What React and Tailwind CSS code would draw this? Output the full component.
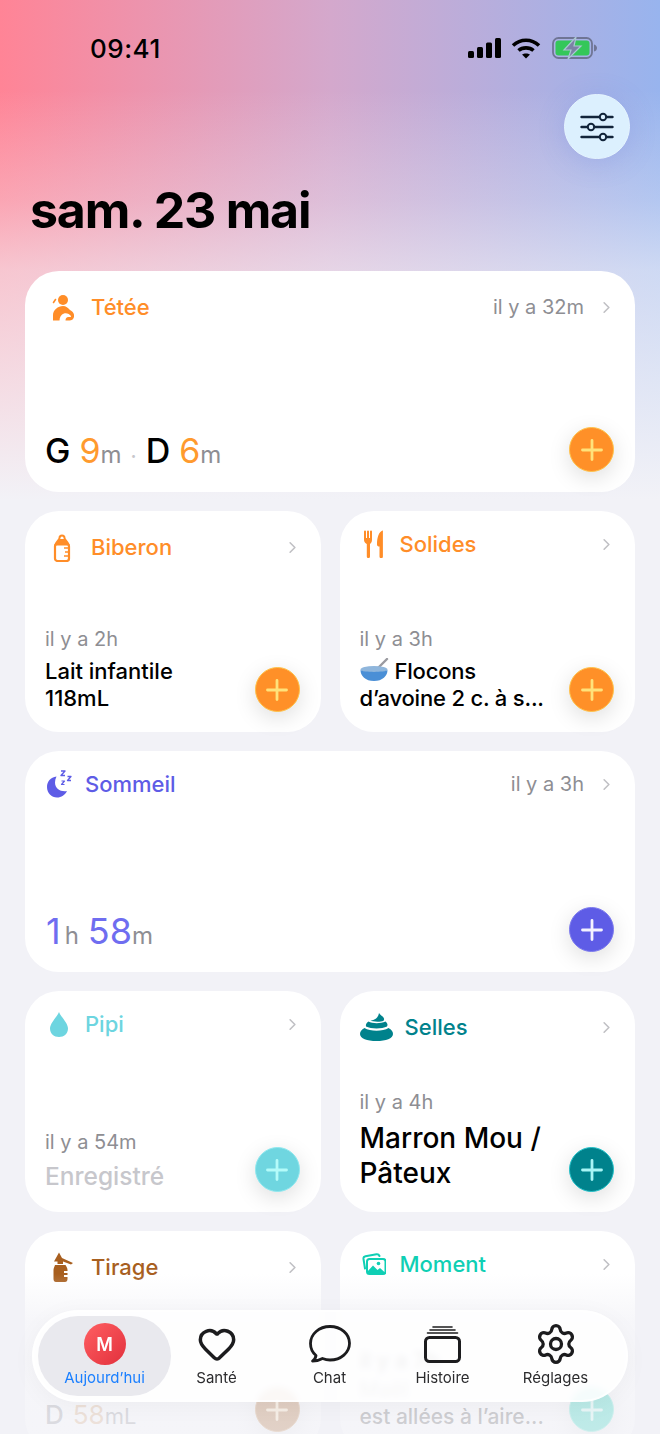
import React from 'react';
import { Heart, Settings, ChevronRight } from 'lucide-react';

// --- Icons ---
const FeedIcon = () => (
  <svg width="22" height="27" viewBox="0 0 22 27" fill="#ff8d28">
    <circle cx="11" cy="6" r="5" />
    <path d="M3.5 5.5 L1.5 8.5" stroke="#ff8d28" strokeWidth="1.6" strokeLinecap="round" />
    <path d="M1 26.5V21C1 16 6 12 11 12C14 12 16 14 18 16C21 17.5 22.5 20 22 23C21.5 25.5 19.5 26.5 17.5 26.5H13.5C13.5 24.5 14.5 23 16.5 23C18 23 19 23.5 19 22C17.5 20 14.5 18.5 12 19.5C9 20.5 7.5 23.5 7.5 26.5Z" />
  </svg>
);

const BottleIcon = () => (
  <svg width="20" height="29" viewBox="0 0 20 29">
    <path d="M7.5 5C7.5 1.5 12.5 1.5 12.5 5C12.5 7 15 8 16.5 11.5H3.5C5 8 7.5 7 7.5 5Z" fill="none" stroke="#ff8d28" strokeWidth="2" />
    <path d="M3.5 11C5 8 7 7.5 7.5 6H12.5C13 7.5 15 8 16.5 11Z" fill="#ff8d28" />
    <rect x="3" y="11" width="14" height="17" rx="2.5" fill="none" stroke="#ff8d28" strokeWidth="2.2" />
    <path d="M12 15H17M13 19H17M12 23H17" stroke="#ff8d28" strokeWidth="1.6" />
  </svg>
);

const CutleryIcon = () => (
  <svg width="20" height="28" viewBox="0 0 20 28" fill="#ff8d28">
    <path d="M0 1.5a1 1 0 0 1 2 0V8h1V1.5a1 1 0 0 1 2 0V8h1V1.5a1 1 0 0 1 2 0V10C8 12.5 6.5 13.5 6 14V26.5a1.6 1.6 0 0 1-3.2 0V14C2 13.5 0 12.5 0 10Z" />
    <path d="M18.5 0.5C15 2 13 7 13 14.5C13 16 14 16.5 15.5 16.5V26.5a1.7 1.7 0 0 0 3.4 0V1C18.9 0.5 18.7 0.4 18.5 0.5Z" />
  </svg>
);

const MoonIcon = () => (
  <svg width="25" height="28" viewBox="0 0 25 28" fill="none">
    <path d="M9.5 6.5C3.5 7.5 0 11.5 0 17C0 23 4.5 27.5 10 27.5C14.5 27.5 18 25 20 21C14 22 8 19 8 12.5C8 10.5 8.5 8.5 9.5 6.5Z" fill="#5e5ce6" />
    <path d="M14 1H18L14 5.5H18" stroke="#5e5ce6" strokeWidth="1.4" strokeLinejoin="round" />
    <path d="M20.5 6.5H24L20.5 10.5H24" stroke="#5e5ce6" strokeWidth="1.3" strokeLinejoin="round" />
    <path d="M14.5 11H17.5L14.5 14.5H17.5" stroke="#5e5ce6" strokeWidth="1.2" strokeLinejoin="round" />
  </svg>
);

const DropIcon = () => (
  <svg width="18" height="25" viewBox="0 0 18 25">
    <path d="M9 0C11 5 18 11 18 16.5C18 21.5 14 25 9 25C4 25 0 21.5 0 16.5C0 11 7 5 9 0Z" fill="#6dd5e0" />
  </svg>
);

const PoopIcon = () => (
  <svg width="33" height="28" viewBox="0 0 33 28" fill="#00828c">
    <path d="M19 0C20 2 23 3 24 5.5C24.5 7.5 23 8.5 21 8.5C16.5 9 12 8.5 10.5 7.5C13 7.5 18 6 19 0Z" />
    <path d="M8.5 8.5C12 10.5 20 11 25.5 8.5C27.5 10 28 12 27 13.5C22 16 11 16 6 13.5C5.5 11.5 6.5 9.5 8.5 8.5Z" />
    <path d="M4.5 15C10 18.5 23 18.5 28.5 15C31.5 16.5 33 18.5 33 21C33 25.5 26 28 16.5 28C7 28 0 25.5 0 21C0 18.5 1.5 16.5 4.5 15Z" />
  </svg>
);

const PumpIcon = () => (
  <svg width="22" height="30" viewBox="0 0 22 30" fill="#a85f1f">
    <path d="M2 9.5L7 0.5L10 6L21 11L19 12.5L11 9.5V12H5.5V9.5Z" />
    <path d="M3 13H13.5C14.5 15 15.5 16 15.5 18V19H12V21H15.5V23H12V25H15.5V27C15.5 29 14.5 30 13 30H4C2.5 30 1.5 29 1.5 27V18C1.5 16 2.5 15 3 13Z" />
  </svg>
);

const PhotosIcon = () => (
  <svg width="24" height="22" viewBox="0 0 24 22" fill="none">
    <path d="M3 15.5L1.5 6C1.3 4.5 2 3.5 3.5 3.2L14.5 1.2C16 1 17 1.8 17.5 3" stroke="#0fcfb4" strokeWidth="2" strokeLinecap="round" />
    <rect x="5" y="6" width="18.5" height="15" rx="2.5" stroke="#0fcfb4" strokeWidth="2" />
    <circle cx="16.5" cy="10.5" r="1.8" fill="#0fcfb4" />
    <path d="M5 19L11 12.5L15.5 17L18 15L23.5 20V21H6Z" fill="#0fcfb4" />
  </svg>
);

const BowlEmoji = () => (
  <svg width="29" height="24" viewBox="0 0 29 24" className="mr-[6px] inline-block align-[-3px]">
    <path d="M27 1L17 11" stroke="#9a9aa0" strokeWidth="2.4" strokeLinecap="round" />
    <ellipse cx="14" cy="11.5" rx="13.5" ry="3.5" fill="#8fb6dc" />
    <path d="M0.5 12C3 14.5 25 14.5 27.5 12C27.5 18 22.5 23 14 23C5.5 23 0.5 18 0.5 12Z" fill="#4a8fd6" />
  </svg>
);

const ChatIcon = () => (
  <svg width="42" height="38" viewBox="0 0 42 38" fill="none" stroke="#1c1c1e" strokeWidth="2.8" strokeLinejoin="round">
    <path d="M21 1.5C10 1.5 1.5 9 1.5 18.5C1.5 23.5 3.5 27.5 7 30.5C6.8 32.5 5.5 34.5 3.5 36C7 36 11 35 13.5 33.5C16 34.5 18.5 35 21 35C32 35 40.5 27.5 40.5 18.25C40.5 9 32 1.5 21 1.5Z" />
  </svg>
);

const StackIcon = () => (
  <svg width="37" height="37" viewBox="0 0 37 37" fill="none" stroke="#1c1c1e" strokeLinecap="round">
    <path d="M9 1H28" strokeWidth="1.6" />
    <path d="M6 4H31" strokeWidth="1.6" />
    <path d="M3.5 7H33.5" strokeWidth="1.6" />
    <rect x="1.5" y="11.5" width="34" height="24" rx="4" strokeWidth="3" />
  </svg>
);

const SlidersIcon = () => (
  <svg width="34" height="30" viewBox="0 0 34 30" fill="none" stroke="#12243a" strokeWidth="2.4" strokeLinecap="round">
    <path d="M1.5 5H19M27 5H32.5" />
    <circle cx="23" cy="5" r="3.2" strokeWidth="2" />
    <path d="M1.5 15H7M15 15H32.5" />
    <circle cx="11" cy="15" r="3.2" strokeWidth="2" />
    <path d="M1.5 25H19M27 25H32.5" />
    <circle cx="23" cy="25" r="3.2" strokeWidth="2" />
  </svg>
);

// --- Small parts ---
const PlusButton = ({ bg, ring, cross }) => (
  <div className={`flex h-[45px] w-[45px] shrink-0 items-center justify-center rounded-full border shadow-[0_6px_22px_rgba(0,0,0,0.13)] ${bg} ${ring}`}>
    <svg width="22" height="22" viewBox="0 0 22 22" stroke={cross} strokeWidth="2.8" strokeLinecap="round">
      <path d="M11 1.5V20.5M1.5 11H20.5" />
    </svg>
  </div>
);

const Ago = ({ children, className = '' }) => (
  <p className={`text-[20px] leading-[24px] text-[#8e8e93] ${className}`}>{children}</p>
);

const Card = ({ icon, iconBox, title, titleColor, headTop, ago, button, children }) => (
  <div className="flex h-[221px] min-w-0 flex-1 flex-col justify-between rounded-[34px] bg-white pr-[21px] pb-[20px] pl-[20px]">
    <div className={`flex items-center ${headTop}`}>
      <div className={`flex shrink-0 items-center ${iconBox}`}>{icon}</div>
      <span className={`text-[22px] leading-[30px] font-medium ${titleColor}`}>{title}</span>
      <div className="ml-auto flex items-center">
        {ago && <Ago>{ago}</Ago>}
        <ChevronRight size={19} strokeWidth={2} className="ml-[13px] mr-[-2px] text-[#c0c0c4]" />
      </div>
    </div>
    <div className="flex items-end justify-between">
      <div className="min-w-0">{children}</div>
      <PlusButton {...button} />
    </div>
  </div>
);

const orange = { bg: 'bg-[#ff9028]', ring: 'border-[#ffc24a]', cross: '#ffe27a' };
const purple = { bg: 'bg-[#5e5ce6]', ring: 'border-[#7d7bee]', cross: '#f4f2ff' };
const cyan = { bg: 'bg-[#6fd6e0]', ring: 'border-[#8fe8ef]', cross: '#b4fbf9' };
const teal = { bg: 'bg-[#00828c]', ring: 'border-[#22c0c8]', cross: '#a8f5f5' };
const brown = { bg: 'bg-[#a85f1f]', ring: 'border-[#c98a4a]', cross: '#ffe0b0' };
const mint = { bg: 'bg-[#0fcfb4]', ring: 'border-[#55e6d0]', cross: '#c8fff4' };

const NavItem = ({ icon, label, active, className = '' }) => (
  <div className={`flex h-[80px] flex-col items-center justify-end pb-[8px] ${active ? 'w-[133px] rounded-[40px] bg-[#e9e9ee]' : 'w-[113px]'} ${className}`}>
    <div className="flex h-[46px] items-center justify-center">{icon}</div>
    <span className={`mt-[1px] text-[15px] leading-[20px] ${active ? 'text-[#1a7fff]' : 'text-[#2c2c2e]'}`}>{label}</span>
  </div>
);

export default function App() {
  return (
    <div className="relative h-[1434px] w-full overflow-hidden bg-[linear-gradient(to_bottom,rgba(242,242,247,0)_90px,rgba(242,242,247,0.3)_200px,rgba(242,242,247,0.6)_270px,#f2f2f7_500px),linear-gradient(to_right,#ff8496,#d4a8cc_50%,#98b4ee)] font-['Inter','Noto_Sans',sans-serif] text-black">
      {/* status bar */}
      <div className="flex h-[94px] items-start justify-between pt-[32px] pr-[62px] pl-[90px]">
        <span className="text-[26px] leading-[34px] font-medium tracking-[0.5px]">09:41</span>
        <div className="flex items-center pt-[5px]">
          <svg width="33" height="20" viewBox="0 0 33 20" fill="#000">
            <rect x="0" y="13" width="6" height="7" rx="1.5" />
            <rect x="9" y="9" width="6" height="11" rx="1.5" />
            <rect x="18" y="4.5" width="6" height="15.5" rx="1.5" />
            <rect x="27" y="0" width="6" height="20" rx="1.5" />
          </svg>
          <svg width="30" height="21" viewBox="0 0 30 21" fill="none" stroke="#000" strokeWidth="3.6" className="ml-[10px]">
            <path d="M2 7.5C9.5 0.5 20.5 0.5 28 7.5" />
            <path d="M7.5 12.5C11.5 9 18.5 9 22.5 12.5" />
            <path d="M15 20.5L11 16.5C13 15 17 15 19 16.5Z" fill="#000" stroke="none" />
          </svg>
          <svg width="46" height="22" viewBox="0 0 46 22" className="ml-[11px]">
            <rect x="1" y="1" width="39" height="20" rx="5.5" fill="none" stroke="#6f7594" strokeWidth="1.8" />
            <rect x="3.5" y="3.5" width="34" height="15" rx="3" fill="#34c759" />
            <path d="M42 7.5C44 8 45 9.5 45 11C45 12.5 44 14 42 14.5Z" fill="#6f7594" />
            <path d="M24 0L12 13H19L16 22L29 9H22Z" fill="#7c82a6" stroke="#a9c7d2" strokeWidth="1.2" />
          </svg>
        </div>
      </div>

      {/* filter button */}
      <div className="flex justify-end pr-[30px]">
        <div className="flex h-[65px] w-[66px] items-center justify-center rounded-full border border-[#e6f5ff] bg-[#dcf0fe] shadow-[0_4px_26px_rgba(110,130,220,0.25)]">
          <SlidersIcon />
        </div>
      </div>

      <h1 className="mt-[20px] pl-[30px] text-[50px] leading-[62px] font-bold tracking-[-1.2px]">sam. 23 mai</h1>

      {/* cards */}
      <div className="mt-[30px] flex flex-col gap-[19px] px-[25px]">
        <div className="flex">
          <Card icon={<FeedIcon />} iconBox="w-[46px] pl-[7px]" title="Tétée" titleColor="text-[#ff8d28]" headTop="pt-[21px]" ago="il y a 32m" button={orange}>
            <p className="-mb-[4px] flex items-baseline text-[34px] leading-[40px] font-medium">
              <span className="mr-[9px]">G</span>
              <span className="font-normal text-[#ff9a2e]">9</span>
              <span className="text-[24px] font-normal text-[#8e8e93]">m</span>
              <span className="mx-[9px] text-[20px] text-[#c7c7cc]">·</span>
              <span className="mr-[9px]">D</span>
              <span className="font-normal text-[#ff9a2e]">6</span>
              <span className="text-[24px] font-normal text-[#8e8e93]">m</span>
            </p>
          </Card>
        </div>

        <div className="flex gap-[19px]">
          <Card icon={<BottleIcon />} iconBox="w-[46px] pl-[7px]" title="Biberon" titleColor="text-[#ff8d28]" headTop="pt-[21px]" button={orange}>
            <Ago className="mb-[7px]">il y a 2h</Ago>
            <p className="text-[22px] leading-[27px] font-medium">Lait infantile<br />118mL</p>
          </Card>
          <Card icon={<CutleryIcon />} iconBox="w-[40px] pl-[4px]" title="Solides" titleColor="text-[#ff8d28]" headTop="pt-[18px]" button={orange}>
            <Ago className="mb-[7px]">il y a 3h</Ago>
            <p className="text-[22px] leading-[27px] font-medium tracking-[-0.2px] whitespace-nowrap"><BowlEmoji />Flocons<br />d’avoine 2 c. à s...</p>
          </Card>
        </div>

        <div className="flex">
          <Card icon={<MoonIcon />} iconBox="w-[40px] pl-[2px]" title="Sommeil" titleColor="text-[#5e5ce6]" headTop="pt-[18px]" ago="il y a 3h" button={purple}>
            <p className="-mb-[4px] flex items-baseline pl-[1px] text-[36px] leading-[40px] font-normal text-[#6f6df0]">
              <span>1</span>
              <span className="ml-[4px] mr-[9px] text-[24px] text-[#8e8e93]">h</span>
              <span>58</span>
              <span className="text-[24px] text-[#8e8e93]">m</span>
            </p>
          </Card>
        </div>

        <div className="flex gap-[19px]">
          <Card icon={<DropIcon />} iconBox="w-[40px] pl-[5px]" title="Pipi" titleColor="text-[#6dd5e0]" headTop="pt-[18px]" button={cyan}>
            <Ago className="mb-[6px]">il y a 54m</Ago>
            <p className="-mb-[1px] text-[24.5px] leading-[33px] font-medium text-[#c7c7cc]">Enregistré</p>
          </Card>
          <Card icon={<PoopIcon />} iconBox="w-[45px]" title="Selles" titleColor="text-[#00828c]" headTop="pt-[21px]" button={teal}>
            <Ago className="mb-[7px]">il y a 4h</Ago>
            <p className="mb-[1px] text-[28px] leading-[35px] font-medium whitespace-nowrap">Marron Mou /<br />Pâteux</p>
          </Card>
        </div>

        <div className="flex gap-[19px]">
          <Card icon={<PumpIcon />} iconBox="w-[46px] pl-[7px]" title="Tirage" titleColor="text-[#a85f1f]" headTop="pt-[21px]" button={brown}>
            <p className="-mb-[2px] flex items-baseline text-[26px] leading-[36px] font-medium">
              <span className="mr-[9px] text-[#8e8e93]">D</span>
              <span className="font-normal text-[#d9a878]">58</span>
              <span className="text-[22px] font-normal text-[#8e8e93]">mL</span>
            </p>
          </Card>
          <Card icon={<PhotosIcon />} iconBox="w-[40px] pl-[2px]" title="Moment" titleColor="text-[#0fcfb4]" headTop="pt-[18px]" button={mint}>
            <p className="mb-[7px] text-[22px] leading-[18px] font-semibold">il y a 7h</p>
            <p className="mb-[2px] text-[21px] leading-[27px] font-medium whitespace-nowrap text-[#555]">Maël<br />est allées à l’aire...</p>
          </Card>
        </div>
      </div>

      {/* fade under the tab bar */}
      <div className="absolute inset-x-0 bottom-0 h-[160px] bg-[linear-gradient(to_bottom,rgba(242,242,247,0)_0%,rgba(242,242,247,0.68)_30%,rgba(242,242,247,0.78)_100%)]" />

      {/* tab bar */}
      <div className="absolute top-[1310px] left-[32px] flex h-[92px] w-[596px] items-center rounded-[46px] border-2 border-white/70 bg-white/85 pl-[4px] shadow-[0_4px_24px_rgba(0,0,0,0.04)] backdrop-blur-[3px]">
        <NavItem
          active
          label="Aujourd’hui"
          icon={
            <div className="flex h-[42px] w-[42px] items-center justify-center rounded-full bg-[linear-gradient(135deg,#ff5f62,#e2303c)] text-[18px] font-semibold text-white">M</div>
          }
        />
        <NavItem className="ml-[-11px]" label="Santé" icon={<Heart size={40} strokeWidth={2.1} color="#1c1c1e" />} />
        <NavItem label="Chat" icon={<ChatIcon />} />
        <NavItem label="Histoire" icon={<StackIcon />} />
        <NavItem label="Réglages" icon={<Settings size={44} strokeWidth={1.8} color="#1c1c1e" />} />
      </div>
    </div>
  );
}
